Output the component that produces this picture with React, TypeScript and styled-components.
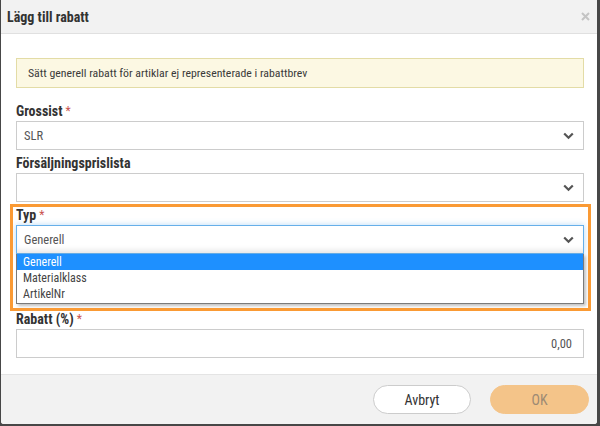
import React from "react";
import styled, { createGlobalStyle } from "styled-components";

const font = `"Roboto Condensed", "Liberation Sans Narrow", "DejaVu Sans Condensed", "Roboto", sans-serif`;

const GlobalStyle = createGlobalStyle`
  html, body {
    margin: 0;
    padding: 0;
    background: #474747;
  }
  body {
    font-family: ${font};
  }
`;

const Backdrop = styled.div`
  width: 600px;
  height: 426px;
  padding-left: 1px;
  box-sizing: border-box;
`;

const Modal = styled.div`
  width: 596px;
  height: 424px;
  background: #fff;
  border-radius: 0 0 3px 3px;
  display: flex;
  flex-direction: column;
  overflow: hidden;
`;

const Header = styled.div`
  height: 33px;
  flex: none;
  background: #f2f2f2;
  border-bottom: 1px solid #e0e0e0;
  display: flex;
  align-items: center;
  justify-content: space-between;
  padding: 0 5px 0 6px;
`;

const Title = styled.h4`
  margin: 0;
  font-size: 14px;
  font-weight: 700;
  color: #333;
`;

const Close = styled.button`
  border: 0;
  background: none;
  padding: 0;
  width: 14px;
  height: 14px;
  display: flex;
  align-items: center;
  justify-content: center;
  cursor: pointer;
`;

const Body = styled.div`
  flex: 1;
  padding: 24px 13px 0 15px;
`;

const Alert = styled.div`
  height: 30px;
  box-sizing: border-box;
  background: #fcf8e3;
  border: 1px solid #e3dca6;
  color: #3a3a3a;
  font-size: 11.8px;
  display: flex;
  align-items: center;
  padding: 0 11px;
  margin-bottom: 14px;
`;

const Field = styled.div<{ $highlight?: boolean }>`
  position: relative;
  margin-bottom: ${(p) => (p.$highlight ? "6px" : "4px")};

  ${(p) =>
    p.$highlight &&
    `
    &::after {
      content: "";
      position: absolute;
      top: -2px;
      left: -6px;
      right: -7px;
      bottom: -7px;
      border: 3px solid #fa9a34;
      pointer-events: none;
    }
  `}
`;

const Label = styled.label`
  display: block;
  height: 19px;
  line-height: 19px;
  font-size: 14px;
  font-weight: 700;
  color: #333;
`;

const Required = styled.span`
  color: #c9524e;
  font-weight: 400;
  font-size: 12px;
  vertical-align: 1px;
  margin-left: 3px;
`;

const SelectBox = styled.div<{ $focused?: boolean }>`
  height: 29px;
  box-sizing: border-box;
  border: 1px solid ${(p) => (p.$focused ? "#66afe9" : "#ccc")};
  box-shadow: ${(p) =>
    p.$focused
      ? "inset 0 -6px 6px -4px rgba(0,0,0,0.12), 0 0 6px rgba(102,175,233,0.45)"
      : "none"};
  background: #fff;
  display: flex;
  align-items: center;
  justify-content: space-between;
  padding: 0 9px 0 7px;
  font-size: 12.5px;
  color: #555;
`;

const Input = styled.div`
  height: 29px;
  box-sizing: border-box;
  border: 1px solid #ccc;
  background: #fff;
  display: flex;
  align-items: center;
  justify-content: flex-end;
  padding: 0 11px;
  font-size: 12.5px;
  color: #555;
`;

const Listbox = styled.ul`
  list-style: none;
  margin: 0;
  padding: 0 0 1px;
  border: 1px solid #7a7a7a;
  border-top: 0;
  background: #fff;
  box-shadow: 2px 2px 3px rgba(0, 0, 0, 0.25);
`;

const Option = styled.li<{ $selected?: boolean }>`
  height: 16px;
  line-height: 16px;
  padding: 0 6px;
  font-size: 12px;
  color: ${(p) => (p.$selected ? "#fff" : "#444")};
  background: ${(p) => (p.$selected ? "#1e90ff" : "transparent")};
`;

const Footer = styled.div`
  height: 49px;
  flex: none;
  background: #f2f2f2;
  border-top: 1px solid #e4e4e4;
  display: flex;
  align-items: center;
  justify-content: flex-end;
  gap: 19px;
  padding: 0 8px 0 0;
`;

const Button = styled.button<{ $primary?: boolean }>`
  width: ${(p) => (p.$primary ? "99px" : "98px")};
  height: 29px;
  border-radius: 15px;
  font-family: ${font};
  font-size: 14px;
  cursor: pointer;
  border: 1px solid ${(p) => (p.$primary ? "#f4c489" : "#ccc")};
  background: ${(p) => (p.$primary ? "#f4c489" : "#fff")};
  color: ${(p) => (p.$primary ? "#9c8a74" : "#333")};
`;

const Chevron = () => (
  <svg width="11" height="8" viewBox="0 0 11 8">
    <path d="M1.2 1.5 L5.5 5.8 L9.8 1.5" fill="none" stroke="#555" strokeWidth="2.2" />
  </svg>
);

const options = ["Generell", "Materialklass", "ArtikelNr"];

export default function App() {
  return (
    <>
      <GlobalStyle />
      <Backdrop>
        <Modal>
          <Header>
            <Title>Lägg till rabatt</Title>
            <Close aria-label="Stäng">
              <svg width="9" height="9" viewBox="0 0 9 9">
                <path d="M1 1 L8 8 M8 1 L1 8" stroke="#c4c4c4" strokeWidth="2" />
              </svg>
            </Close>
          </Header>
          <Body>
            <Alert>Sätt generell rabatt för artiklar ej representerade i rabattbrev</Alert>
            <Field>
              <Label>
                Grossist<Required>*</Required>
              </Label>
              <SelectBox>
                SLR
                <Chevron />
              </SelectBox>
            </Field>
            <Field>
              <Label>Försäljningsprislista</Label>
              <SelectBox>
                <span />
                <Chevron />
              </SelectBox>
            </Field>
            <Field $highlight>
              <Label>
                Typ<Required>*</Required>
              </Label>
              <SelectBox $focused>
                Generell
                <Chevron />
              </SelectBox>
              <Listbox>
                {options.map((o, i) => (
                  <Option key={o} $selected={i === 0}>
                    {o}
                  </Option>
                ))}
              </Listbox>
            </Field>
            <Field>
              <Label>
                Rabatt (%)<Required>*</Required>
              </Label>
              <Input>0,00</Input>
            </Field>
          </Body>
          <Footer>
            <Button>Avbryt</Button>
            <Button $primary disabled>
              OK
            </Button>
          </Footer>
        </Modal>
      </Backdrop>
    </>
  );
}
